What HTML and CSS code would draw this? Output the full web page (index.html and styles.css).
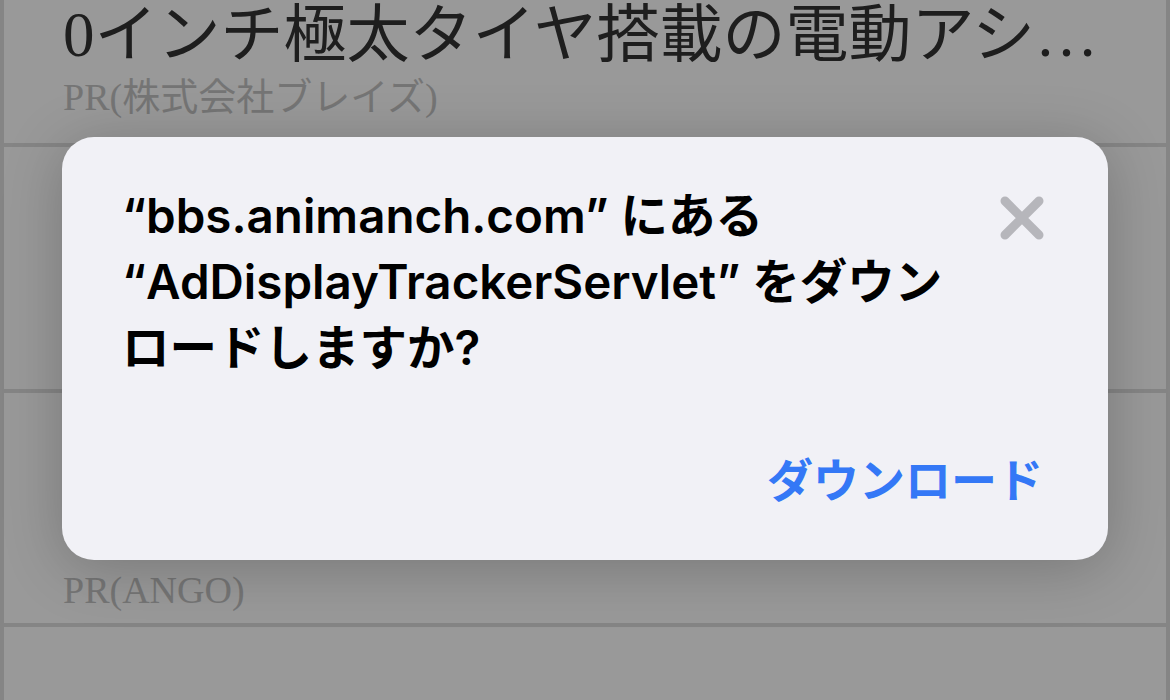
FILE: index.html
```html
<!DOCTYPE html>
<html lang="ja">
<head>
<meta charset="utf-8">
<link rel="stylesheet" href="styles.css">
</head>
<body>
<div class="list">
  <div class="row r1">
    <div class="title">0インチ極太タイヤ搭載の電動アシスト自転車</div>
    <div class="pr">PR(株式会社ブレイズ)</div>
  </div>
  <div class="row r2">
    <div class="title">話題の新作ゲームをチェック</div>
    <div class="pr">PR</div>
  </div>
  <div class="row r3">
    <div class="title">今すぐ始める</div>
    <div class="pr">PR(ANGO)</div>
  </div>
  <div class="row r4"></div>
</div>
<div class="dim"></div>
<div class="alert">
  <div class="alert-head">
    <p class="alert-text">“bbs.animanch.com” にある<br>“AdDisplayTrackerServlet” をダウン<br>ロードしますか?</p>
    <svg class="close" width="44" height="44" viewBox="0 0 44 44"><path d="M5 5 L39 39 M39 5 L5 39" stroke="#b6b6bb" stroke-width="9" stroke-linecap="round" fill="none"/></svg>
  </div>
  <div class="alert-foot">
    <span class="btn">ダウンロード</span>
  </div>
</div>
</body>
</html>
```
FILE: styles.css
```css
html, body {
  margin: 0;
  padding: 0;
  width: 1170px;
  height: 700px;
  overflow: hidden;
  background: #ffffff;
}
.list {
  display: flex;
  flex-direction: column;
  border-left: 4px solid #dedede;
  border-right: 4px solid #dedede;
  height: 700px;
  box-sizing: border-box;
  overflow: hidden;
}
.row {
  display: flex;
  flex-direction: column;
  justify-content: flex-end;
  padding: 0 30px 24px 59px;
  border-bottom: 4px solid #dedede;
  flex: none;
  box-sizing: border-box;
  overflow: hidden;
}
.r1 { height: 147px; }
.r2 { height: 246px; }
.r3 { height: 234px; padding-bottom: 11px; }
.r4 { flex: 1 1 auto; min-height: 0; border-bottom: none; }
.title {
  font-family: "Liberation Serif", "Noto Sans CJK JP", serif;
  font-size: 63px;
  line-height: 70px;
  margin-bottom: 9px;
  color: #333333;
  white-space: nowrap;
  overflow: hidden;
  text-overflow: ellipsis;
}
.pr {
  font-family: "Liberation Serif", "Noto Sans CJK JP", serif;
  font-size: 38px;
  line-height: 44px;
  color: #c4c4c4;
  white-space: nowrap;
}
.dim {
  position: absolute;
  inset: 0;
  background: rgba(0, 0, 0, 0.4);
}
.alert {
  position: absolute;
  left: 62px;
  top: 137px;
  width: 1046px;
  height: 423px;
  box-sizing: border-box;
  background: #f1f1f6;
  border-radius: 32px;
  box-shadow: 0 8px 60px rgba(0, 0, 0, 0.22);
  padding: 46px 64px 50px 60px;
  display: flex;
  flex-direction: column;
  justify-content: space-between;
  font-family: "Inter", "Noto Sans CJK JP", sans-serif;
}
.alert-head {
  display: flex;
  justify-content: space-between;
  align-items: flex-start;
}
.alert-text {
  margin: 0;
  font-size: 47.5px;
  line-height: 66px;
  font-weight: 600;
  color: #000000;
}
.close {
  margin-top: 13px;
  flex: none;
}
.alert-foot {
  display: flex;
  justify-content: flex-end;
}
.btn {
  font-size: 46px;
  line-height: 60px;
  font-weight: 700;
  color: #3478f6;
  margin-right: 1px;
}
```
